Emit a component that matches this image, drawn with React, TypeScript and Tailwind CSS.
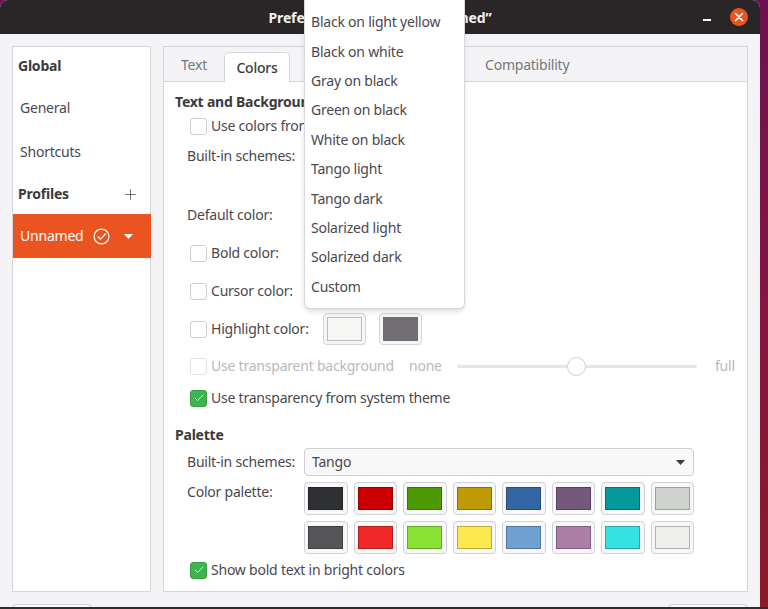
import React from 'react';
import { Check, Plus } from 'lucide-react';

const schemes = [
    'Black on light yellow',
    'Black on white',
    'Gray on black',
    'Green on black',
    'White on black',
    'Tango light',
    'Tango dark',
    'Solarized light',
    'Solarized dark',
    'Custom',
];

const palette = [
    '#2e3033', '#cc0000', '#4e9a06', '#bd9a06', '#3465a4', '#75597b', '#06989a', '#d0d2d0',
    '#555558', '#ef2929', '#8ae234', '#fce94f', '#6f9fd3', '#ad7fa8', '#34e2e2', '#eeeeec',
];

const CheckBox: React.FC<{ checked?: boolean; faded?: boolean }> = ({ checked, faded }) => (
    <span
        className={
            checked
                ? 'w-[17px] h-[17px] shrink-0 rounded-[3px] bg-[#3eb34f] border border-[#35a045] flex items-center justify-center'
                : faded
                  ? 'w-[17px] h-[17px] shrink-0 rounded-[3px] bg-white border border-[#e2e2e4]'
                  : 'w-[17px] h-[17px] shrink-0 rounded-[3px] bg-white border border-[#cdcdd2]'
        }
    >
        {checked && <Check size={12} strokeWidth={1.5} className="text-white" />}
    </span>
);

// Noto sits a pixel lower than the original font, so labels get nudged up
const Label: React.FC<{ children: React.ReactNode; className?: string }> = ({ children, className }) => (
    <span className={`-mt-[2px] ${className ?? ''}`}>{children}</span>
);

const Swatch: React.FC<{ color: string }> = ({ color }) => (
    <span className="h-[33px] rounded-[4px] bg-[#f8f8f9] border border-[#d0d1d7] flex items-center justify-center">
        <span className="w-[35px] h-[23px] border border-black/25" style={{ backgroundColor: color }} />
    </span>
);

export default function App() {
    return (
        <div className="w-[768px] h-[609px] overflow-hidden flex flex-col text-[14px] tracking-[-0.22px] text-[#4b4750] font-['Noto_Sans',sans-serif]">
            <div className="h-[607px] flex bg-gradient-to-b from-[#6d1250] via-[#851440] to-[#8a1a28]">
                <div className="relative w-[760px] h-full rounded-t-[8px] overflow-hidden bg-[#f4f4f6] flex flex-col">
                    {/* title bar */}
                    <div className="h-[34px] shrink-0 bg-[#2a2627] flex items-center justify-center relative">
                        <span className="font-bold text-[14px] tracking-[-0.12px] text-[#f2f2f2]">Preferences – Profile “Unnamed”</span>
                        <span className="absolute left-[703px] top-[19px] w-[8px] h-[1.5px] bg-white" />
                        <span className="absolute left-[730px] top-[8px] w-[18px] h-[18px] rounded-full bg-[#e95420] flex items-center justify-center">
                            <svg width="10" height="10" viewBox="0 0 10 10" stroke="white" strokeWidth="1.6" strokeLinecap="round">
                                <path d="M1.5 1.5l7 7M8.5 1.5l-7 7" />
                            </svg>
                        </span>
                    </div>

                    <div className="flex gap-[12px] pl-[12px] pr-[12px] pt-[12px] shrink-0">
                        {/* sidebar */}
                        <div className="w-[139px] h-[546px] shrink-0 bg-white border border-[#d5d6da] flex flex-col">
                            <div className="h-[38px] flex items-center pl-[5px] font-bold text-[#3a3a3e]"><Label>Global</Label></div>
                            <div className="h-[44px] flex items-center pl-[7px]">General</div>
                            <div className="h-[44px] flex items-center pl-[7px]">Shortcuts</div>
                            <div className="h-[41px] flex items-center justify-between pl-[5px] pr-[11px] font-bold text-[#3a3a3e]">
                                Profiles
                                <Plus size={17} strokeWidth={1} className="text-[#3a3a3e] mt-[2px]" />
                            </div>
                            <div className="h-[44px] bg-[#e95420] text-white flex items-center pl-[7px] -mr-[1px]">
                                <Label className="w-[73px]">Unnamed</Label>
                                <svg width="17" height="17" viewBox="0 0 17 17" fill="none" stroke="white" strokeWidth="1.2" strokeLinecap="round" strokeLinejoin="round">
                                    <circle cx="8.5" cy="8.5" r="7.4" />
                                    <path d="M5 8.8l2.5 2.4L12.3 6" />
                                </svg>
                                <svg width="9" height="5" viewBox="0 0 9 5" fill="white" className="ml-[14px]">
                                    <path d="M0 0h9L4.5 5z" />
                                </svg>
                            </div>
                        </div>

                        {/* notebook */}
                        <div className="w-[585px] h-[546px] shrink-0 bg-white border border-[#d5d6da] flex flex-col">
                            <div className="h-[35px] shrink-0 bg-[#f4f4f6] border-b border-[#d5d6da] flex items-end relative">
                                <span className="w-[60px] h-[34px] flex items-center justify-center text-[#77767b]">Text</span>
                                <span className="w-[66px] h-[30px] -mb-[1px] bg-white border border-b-0 border-[#d5d6da] rounded-t-[5px] flex items-center justify-center font-medium text-[#3a3a3e]">Colors</span>
                                <span className="absolute left-[321px] top-0 h-[34px] flex items-center text-[#77767b]">Compatibility</span>
                            </div>
                            <div className="flex flex-col pl-[11px] pr-[11px]">
                                <div className="h-[20px] mt-[10px] flex items-center font-bold text-[#3a3a3e]"><Label>Text and Background Color</Label></div>
                                <div className="h-[28px] flex items-center gap-[4px] pl-[15px]"><CheckBox /><Label>Use colors from system theme</Label></div>
                                <div className="h-[32px] flex items-center pl-[12px]"><Label>Built-in schemes:</Label></div>
                                <div className="h-[28px]" />
                                <div className="h-[30px] flex items-center pl-[12px]"><Label>Default color:</Label></div>
                                <div className="h-[46px] flex items-center gap-[4px] pl-[15px]"><CheckBox /><Label>Bold color:</Label></div>
                                <div className="h-[30px] flex items-center gap-[4px] pl-[15px]"><CheckBox /><Label>Cursor color:</Label></div>
                                <div className="h-[46px] flex items-center pl-[15px]">
                                    <CheckBox />
                                    <Label className="ml-[4px] w-[112px]">Highlight color:</Label>
                                    <span className="w-[43px] h-[32px] rounded-[4px] bg-[#f6f6f7] border border-[#d5d6da] flex items-center justify-center">
                                        <span className="w-[35px] h-[24px] bg-[#f6f7f5] border border-[#bdbdbb]" />
                                    </span>
                                    <span className="ml-[13px] w-[43px] h-[32px] rounded-[4px] bg-[#f6f6f7] border border-[#d5d6da] flex items-center justify-center">
                                        <span className="w-[35px] h-[24px] bg-[#706e73]" />
                                    </span>
                                </div>
                                <div className="h-[28px] flex items-center pl-[15px] text-[#b9b9bc]">
                                    <CheckBox faded />
                                    <Label className="ml-[4px] w-[198px]">Use transparent background</Label>
                                    <Label className="w-[48px]">none</Label>
                                    <span className="relative w-[240px] h-[3px] bg-[#e4e5e7] rounded-full">
                                        <span className="absolute left-[110px] -top-[8px] w-[19px] h-[19px] rounded-full bg-white border border-[#cfd0d4]" />
                                    </span>
                                    <Label className="ml-[18px]">full</Label>
                                </div>
                                <div className="h-[36px] flex items-center gap-[4px] pl-[15px]"><CheckBox checked /><Label>Use transparency from system theme</Label></div>
                                <div className="h-[20px] mt-[9px] flex items-center font-bold text-[#3a3a3e]"><Label>Palette</Label></div>
                                <div className="h-[28px] mt-[3px] flex items-center pl-[12px]">
                                    <Label className="w-[117px]">Built-in schemes:</Label>
                                    <span className="w-[390px] h-[28px] rounded-[4px] bg-[#f8f8f9] border border-[#cfd0d6] flex items-center justify-between pl-[7px] pr-[8px]">
                                        <Label>Tango</Label>
                                        <svg width="9" height="5" viewBox="0 0 9 5" fill="#3a3a3e"><path d="M0 0h9L4.5 5z" /></svg>
                                    </span>
                                </div>
                                <div className="flex mt-[6px] pl-[12px]">
                                    <span className="w-[117px] h-[18px] flex items-center">Color palette:</span>
                                    <div className="w-[390px] grid grid-cols-8 gap-x-[6px] gap-y-[6px]">
                                        {palette.map((color, i) => (
                                            <Swatch key={i} color={color} />
                                        ))}
                                    </div>
                                </div>
                                <div className="h-[20px] mt-[6px] flex items-center gap-[4px] pl-[15px]"><CheckBox checked /><Label>Show bold text in bright colors</Label></div>
                            </div>
                        </div>
                    </div>

                    {/* dialog buttons, cut off by the screenshot */}
                    <div className="flex justify-between pl-[12px] pr-[12px] mt-[12px]">
                        <span className="w-[80px] h-[10px] bg-[#fafafa] border border-[#cfd0d6] rounded-t-[4px]" />
                        <span className="w-[80px] h-[10px] bg-[#fafafa] border border-[#cfd0d6] rounded-t-[4px]" />
                    </div>

                    {/* open dropdown */}
                    <div className="absolute left-[304px] top-0 w-[161px] h-[309px] bg-white rounded-b-[6px] border border-t-0 border-[#d8d9dd] shadow-md flex flex-col pt-[7px] pl-[6px]">
                        {schemes.map(name => (
                            <div key={name} className="h-[29.4px] shrink-0 flex items-center">{name}</div>
                        ))}
                    </div>
                </div>
            </div>
            <div className="h-[2px] bg-[#2d2d2d]" />
        </div>
    );
}
